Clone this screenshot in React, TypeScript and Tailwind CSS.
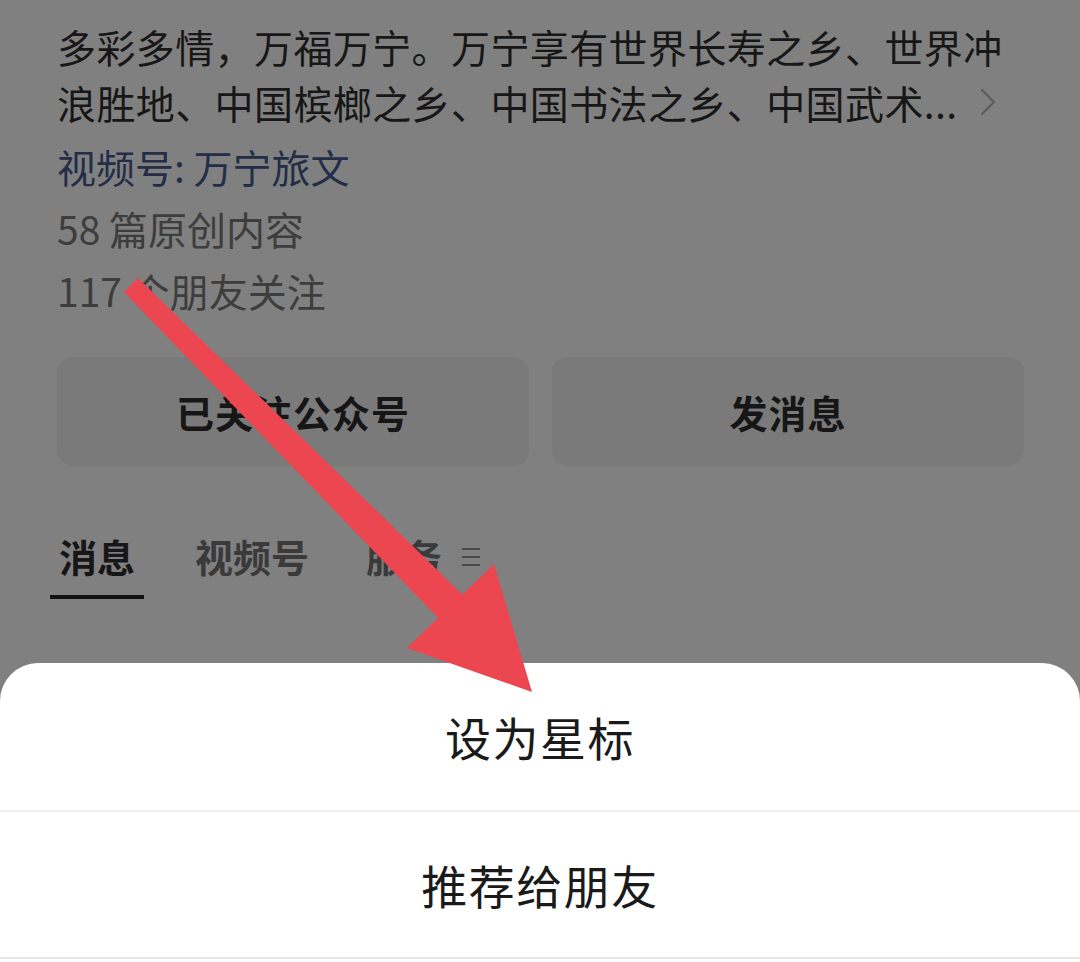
import { ChevronRight } from "lucide-react";

const tabs = [
  { label: "消息", active: true, gap: "" },
  { label: "视频号", active: false, gap: "ml-[51px]" },
  { label: "服务", active: false, gap: "ml-[57px]" },
];

function Arrow() {
  // annotation arrow drawn over the screenshot
  return (
    <svg
      aria-hidden
      className="pointer-events-none absolute inset-0 h-full w-full"
      viewBox="0 0 1080 962"
    >
      <polygon points="138,278 124,292 443,623 467,599" fill="#ec4650" />
      <polygon points="407,648 494,564 532,692" fill="#ec4650" />
    </svg>
  );
}

export default function App() {
  return (
    <div className="relative flex h-[962px] w-[1080px] flex-col overflow-hidden bg-[#808080] font-['Noto_Sans_CJK_SC',sans-serif]">
      {/* Profile info under the dimmed overlay */}
      <div className="pr-[56px] pl-[57px] pt-[18px]">
        <p className="text-[39px] leading-[56px] tracking-[0.4px] text-[#171717]">
          多彩多情，万福万宁。万宁享有世界长寿之乡、世界冲
          <br />
          <span className="inline-flex items-center">
            浪胜地、中国槟榔之乡、中国书法之乡、中国武术...
            <ChevronRight className="-my-[8px] ml-[6px] h-[48px] w-[48px] text-[#5c5c5c]" strokeWidth={1.1} />
          </span>
        </p>
        <div className="mt-[5px] text-[39px] leading-[62px]">
          <div className="text-[#232d47]">视频号: 万宁旅文</div>
          <div className="text-[#3d3d3d]">58 篇原创内容</div>
          <div className="text-[#3d3d3d]">117 个朋友关注</div>
        </div>

        <div className="mt-[36px] grid grid-cols-2 gap-[23px]">
          {["已关注公众号", "发消息"].map((t) => (
            <div
              key={t}
              className="flex h-[109px] items-center justify-center rounded-[16px] bg-[#7a7a7a] text-[38px] font-semibold tracking-[1px] text-[#161616]"
            >
              {t}
            </div>
          ))}
        </div>
      </div>

      {/* Tabs */}
      <div className="mt-[70px] flex items-start pl-[50px]">
        {tabs.map((tab) => (
          <div key={tab.label} className={`flex flex-col items-center ${tab.gap}`}>
            <span
              className={
                tab.active
                  ? "text-[38px] leading-[40px] font-bold text-[#161616]"
                  : "text-[38px] leading-[40px] font-semibold text-[#3a3a3a]"
              }
            >
              {tab.label}
            </span>
            {tab.active && <div className="mt-[19px] h-[4px] w-[94px] bg-[#121212]" />}
          </div>
        ))}
        <div className="mt-[12px] ml-[20px] flex w-[18px] flex-col gap-[6px]">
          <div className="h-[2px] bg-[#4a4a4a]" />
          <div className="h-[2px] bg-[#4a4a4a]" />
          <div className="h-[2px] bg-[#4a4a4a]" />
        </div>
      </div>

      {/* Action sheet */}
      <div className="mt-auto flex h-[299px] flex-col rounded-t-[38px] bg-white text-[46px] tracking-[1.5px] text-[#1a1a1a]">
        <div className="flex h-[147px] items-center justify-center">设为星标</div>
        <div className="h-[2px] bg-[#efefef]" />
        <div className="flex h-[145px] items-center justify-center">推荐给朋友</div>
        <div className="h-[2px] bg-[#e6e6e6]" />
      </div>

      <Arrow />
    </div>
  );
}
